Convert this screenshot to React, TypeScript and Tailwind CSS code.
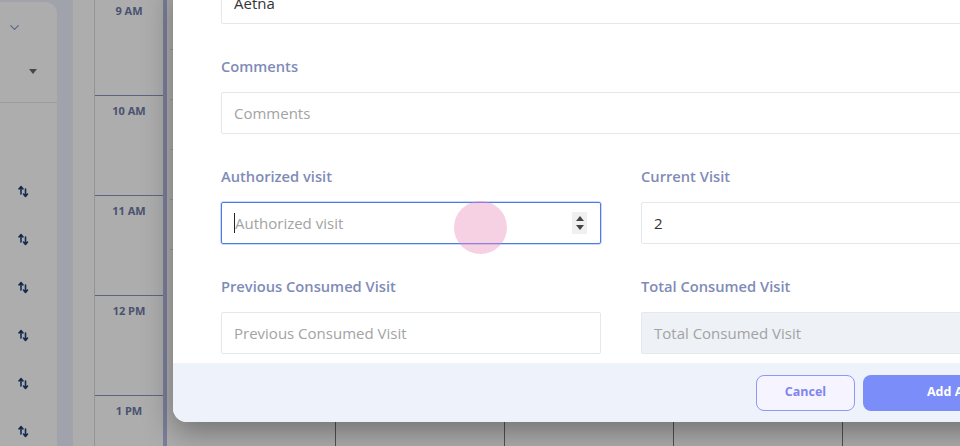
import { ChevronDown } from "lucide-react";

// ─── Background calendar ──────────────────────────────────────────────────────

const HOURS = ["9 AM", "10 AM", "11 AM", "12 PM", "1 PM"];
const SORT_ROWS = [0, 1, 2, 3, 4, 5];
const DAY_COLS = [0, 1, 2, 3, 4];

function SortIcon() {
    return (
        <svg width="11" height="13" viewBox="0 0 11 13" fill="none">
            <path d="M3 9V2M1 4l2-2.5L5 4" stroke="#1f3f78" strokeWidth="1.6" strokeLinecap="round" strokeLinejoin="round" />
            <path d="M7.5 4v7M5.5 9l2 2.5 2-2.5" stroke="#1f3f78" strokeWidth="1.6" strokeLinecap="round" strokeLinejoin="round" />
        </svg>
    );
}

function Sidebar() {
    return (
        <div className="w-[57px] shrink-0 pt-[2px]">
            <div className="h-full bg-white rounded-tr-[12px] flex flex-col">
                <div className="h-[101px] border-b border-[#e6e6e6] relative">
                    <ChevronDown size={15} strokeWidth={1.8} className="absolute left-[7px] top-[18px] text-[#7f92d6]" />
                    <div className="absolute left-[29px] top-[67px] w-0 h-0 border-l-[4px] border-r-[4px] border-t-[5px] border-l-transparent border-r-transparent border-t-[#6a6a6a]" />
                </div>
                <div className="flex flex-col items-start pt-[82px] gap-[35px] pl-[18px]">
                    {SORT_ROWS.map((r) => (
                        <SortIcon key={r} />
                    ))}
                </div>
            </div>
        </div>
    );
}

function TimeColumn() {
    return (
        <div className="w-[68px] shrink-0 bg-white flex flex-col -mt-[5px]">
            {HOURS.map((h) => (
                <div key={h} className="h-[100px] shrink-0 border-t border-[#8a94c0] pt-[8px] text-center text-[11px] font-bold text-[#6c7aa8] leading-[14px]">
                    {h}
                </div>
            ))}
        </div>
    );
}

function Calendar() {
    return (
        <div className="flex-1 flex bg-white pl-[3px] relative">
            {DAY_COLS.map((c) => (
                <div key={c} className={`shrink-0 h-full border-r border-[#777] ${c === 0 ? "w-[166px]" : "w-[169px]"}`}>
                    {HOURS.map((h) => (
                        <div key={h} className="h-[50px] border-b border-[#e2e2e2]" />
                    ))}
                </div>
            ))}
        </div>
    );
}

// ─── Modal ────────────────────────────────────────────────────────────────────

function Label({ children }: { children: React.ReactNode }) {
    return <div className="h-5 leading-5 text-[14.7px] font-semibold text-[#7f8bb7]">{children}</div>;
}

const INPUT = "h-[42px] w-full border border-[#e5e7eb] rounded-[2px] px-3 flex items-center text-[15px]";

function Field({ label, children }: { label: string; children: React.ReactNode }) {
    return (
        <div className="flex flex-col gap-4">
            <Label>{label}</Label>
            {children}
        </div>
    );
}

function Spinner() {
    return (
        <div className="w-[15px] h-[22px] bg-[#f0f0f0] flex flex-col items-center justify-center gap-[4px]">
            <div className="w-0 h-0 border-l-[4px] border-r-[4px] border-b-[5px] border-l-transparent border-r-transparent border-b-[#444]" />
            <div className="w-0 h-0 border-l-[4px] border-r-[4px] border-t-[5px] border-l-transparent border-r-transparent border-t-[#444]" />
        </div>
    );
}

function Modal() {
    return (
        <div className="absolute left-[173px] bottom-[24px] w-[900px] bg-white rounded-bl-[14px] overflow-hidden shadow-[0_10px_30px_rgba(0,0,0,0.35)]">
            <div className="px-12 pb-[9px] flex flex-col gap-8">
                <div className={`${INPUT} text-[#333]`}>Aetna</div>

                <Field label="Comments">
                    <div className={`${INPUT} text-[#a3a3a3]`}>Comments</div>
                </Field>

                <div className="grid grid-cols-[380px_380px] gap-x-10 gap-y-8">
                    <Field label="Authorized visit">
                        <div className="relative h-[42px] w-full border border-[#4f7ae6] rounded-[2px] pl-3 pr-[13px] flex items-center text-[15px] text-[#a3a3a3] outline outline-1 outline-[#7f9ff0]/40">
                            <span className="w-px h-[20px] bg-[#222]" />
                            <span className="flex-1">Authorized visit</span>
                            <Spinner />
                            {/* tap indicator */}
                            <div className="absolute left-[232px] top-[-2px] w-[53px] h-[53px] rounded-full bg-[#e98bb8]/40" />
                        </div>
                    </Field>
                    <Field label="Current Visit">
                        <div className={`${INPUT} text-[#333] text-[15px]`}>2</div>
                    </Field>
                    <Field label="Previous Consumed Visit">
                        <div className={`${INPUT} text-[#a3a3a3]`}>Previous Consumed Visit</div>
                    </Field>
                    <Field label="Total Consumed Visit">
                        <div className={`${INPUT} bg-[#eef1f6] text-[#a3a3a3]`}>Total Consumed Visit</div>
                    </Field>
                </div>
            </div>

            <div className="h-[59px] bg-[#eef2fa] flex items-center justify-end gap-2 px-12">
                <button className="w-[99px] h-9 rounded-[8px] border border-[#8f97f7] bg-[#f6f4ff] text-[12.5px] font-bold text-[#7f86ee]">
                    Cancel
                </button>
                <button className="w-[162px] h-9 rounded-[8px] bg-[#7b8df8] text-[12.5px] font-bold text-white text-left pl-[64px] whitespace-nowrap overflow-hidden">
                    Add Authorization
                </button>
            </div>
        </div>
    );
}

export default function App() {
    return (
        <div className="relative w-[960px] h-[446px] overflow-hidden bg-[#edf1fe] font-['Open_Sans',sans-serif]">
            <div className="flex h-full">
                <Sidebar />
                <div className="w-[16px] shrink-0" />
                <div className="w-[22px] shrink-0 bg-white border-r border-[#dadada]" />
                <TimeColumn />
                <div className="w-[4px] shrink-0 bg-[#b5bbe3]" />
                <Calendar />
            </div>
            {/* backdrop */}
            <div className="absolute inset-0 bg-black/[0.32]" />
            <Modal />
        </div>
    );
}
